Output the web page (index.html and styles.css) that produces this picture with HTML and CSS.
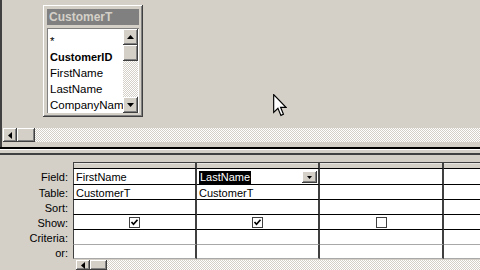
FILE: index.html
```html
<!DOCTYPE html>
<html>
<head>
<meta charset="utf-8">
<link rel="stylesheet" href="styles.css">
</head>
<body>
<section class="design">
  <div class="canvas">
    <div class="fieldlist">
      <div class="fl-title">CustomerT</div>
      <div class="fl-body">
        <ul class="fl-items">
          <li>*</li>
          <li class="pk">CustomerID</li>
          <li>FirstName</li>
          <li>LastName</li>
          <li>CompanyName</li>
        </ul>
        <div class="vscroll">
          <div class="btn arrow"><svg width="7" height="4" viewBox="0 0 7 4"><polygon points="3.5,0 7,4 0,4" fill="#000"/></svg></div>
          <div class="btn vthumb"></div>
          <div class="track"></div>
          <div class="btn arrow"><svg width="7" height="4" viewBox="0 0 7 4"><polygon points="0,0 7,0 3.5,4" fill="#000"/></svg></div>
        </div>
      </div>
    </div>
  </div>
  <div class="hscroll">
    <div class="btn arrow harrow"><svg width="4" height="7" viewBox="0 0 4 7"><polygon points="4,0 4,7 0,3.5" fill="#000"/></svg></div>
    <div class="btn hthumb"></div>
    <div class="track"></div>
  </div>
</section>
<div class="splitter"></div>
<section class="qbe">
  <div class="corner"></div>
  <div class="c h first"></div><div class="c h"></div><div class="c h"></div><div class="c h last"></div>

  <div class="lbl">Field:</div>
  <div class="c first">FirstName</div>
  <div class="c"><span class="sel">LastName</span><span class="btn dd"><svg width="5" height="3" viewBox="0 0 5 3"><polygon points="0,0 5,0 2.5,3" fill="#000"/></svg></span></div>
  <div class="c"></div><div class="c last"></div>

  <div class="lbl">Table:</div>
  <div class="c first">CustomerT</div><div class="c">CustomerT</div><div class="c"></div><div class="c last"></div>

  <div class="lbl">Sort:</div>
  <div class="c first"></div><div class="c"></div><div class="c"></div><div class="c last"></div>

  <div class="lbl">Show:</div>
  <div class="c first mid"><span class="chk"><svg width="9" height="9" viewBox="0 0 9 9"><path d="M1.5 4 L3.5 6.2 L7.5 1.8" fill="none" stroke="#000" stroke-width="1.7"/></svg></span></div>
  <div class="c mid"><span class="chk"><svg width="9" height="9" viewBox="0 0 9 9"><path d="M1.5 4 L3.5 6.2 L7.5 1.8" fill="none" stroke="#000" stroke-width="1.7"/></svg></span></div>
  <div class="c mid"><span class="chk"></span></div>
  <div class="c last"></div>

  <div class="lbl">Criteria:</div>
  <div class="c first soft"></div><div class="c soft"></div><div class="c soft"></div><div class="c last soft"></div>

  <div class="lbl">or:</div>
  <div class="c first soft"></div><div class="c soft"></div><div class="c soft"></div><div class="c last soft"></div>

  <div class="corner"></div>
  <div class="hscroll2">
    <div class="btn arrow harrow"><svg width="4" height="7" viewBox="0 0 4 7"><polygon points="4,0 4,7 0,3.5" fill="#000"/></svg></div>
    <div class="btn hthumb2"></div>
    <div class="track"></div>
  </div>
</section>
<svg class="cursor" width="14" height="23" viewBox="0 0 12 20">
  <path d="M0.5 0.5 L0.5 16 L4.2 12.4 L6.8 18.6 L9 17.6 L6.5 11.6 L11.2 11.6 Z" fill="#fff" stroke="#000" stroke-width="1"/>
</svg>
</body>
</html>
```

FILE: styles.css
```css
body {
  margin: 0;
  width: 480px;
  height: 270px;
  overflow: hidden;
  position: relative;
  background: #d4d0c8;
  font-family: "Liberation Sans", Arial, sans-serif;
  font-size: 11px;
  color: #000;
}

.btn {
  background: #d4d0c8;
  box-shadow: inset -1px -1px #404040, inset 1px 1px #fff, inset -2px -2px #808080, inset 2px 2px #d4d0c8;
  box-sizing: border-box;
}

.arrow {
  display: flex;
  align-items: center;
  justify-content: center;
}

.track {
  flex: 1;
  background: repeating-conic-gradient(#d4d0c8 0 25%, #fff 0 50%) 0 0 / 2px 2px;
}

/* upper design pane */
.design {
  height: 147px;
  box-sizing: border-box;
  border-left: 2px solid #404040;
  display: flex;
  flex-direction: column;
}

.canvas {
  height: 128px;
  box-sizing: border-box;
  padding: 5px 0 0 41px;
}

.fieldlist {
  width: 100px;
  height: 112px;
  box-sizing: border-box;
  padding: 4px;
  display: flex;
  flex-direction: column;
  gap: 3px;
  background: #d4d0c8;
  box-shadow: inset -1px -1px #404040, inset 1px 1px #fff, inset -2px -2px #808080, inset 2px 2px #d4d0c8;
}

.fl-title {
  height: 16px;
  line-height: 16px;
  padding-left: 2px;
  background: #808080;
  color: #d4d0c8;
  font-weight: bold;
  font-size: 12px;
}

.fl-body {
  flex: 1;
  display: flex;
  background: #fff;
  border-top: 1px solid #808080;
  border-left: 1px solid #808080;
}

.fl-items {
  flex: 1;
  min-width: 0;
  margin: 0;
  padding: 4px 0 0 2px;
  list-style: none;
  overflow: hidden;
  white-space: nowrap;
  line-height: 16px;
  font-size: 11.5px;
}

.fl-items .pk {
  font-weight: bold;
  font-size: 11px;
}

.vscroll {
  width: 15px;
  margin-right: 1px;
  display: flex;
  flex-direction: column;
}

.vscroll .arrow {
  height: 16px;
}

.vthumb {
  height: 16px;
}

.hscroll {
  height: 14px;
  margin-left: 1px;
  display: flex;
}

.harrow {
  width: 14px;
}

.hthumb {
  width: 18px;
}

/* splitter bar */
.splitter {
  height: 8px;
  box-sizing: border-box;
  border-top: 2px solid #000;
  border-bottom: 2px solid #404040;
  background: #d4d0c8;
  box-shadow: inset 0 1px #fff;
}

/* lower QBE grid */
.qbe {
  height: 115px;
  box-sizing: border-box;
  padding-top: 7px;
  display: grid;
  grid-template-columns: 73px 124px 123px 124px 1fr;
  grid-template-rows: 7px 16px 15px 15px 15px 15px 14px 1fr;
}

.lbl {
  text-align: right;
  padding: 1px 5px 0 0;
  line-height: 15px;
}

.c {
  box-sizing: border-box;
  background: #fff;
  border-bottom: 1px solid #000;
  border-right: 2px solid #404040;
  display: flex;
  align-items: center;
  padding: 1px 0 0 2px;
  white-space: nowrap;
  overflow: hidden;
}

.c.first {
  border-left: 1px solid #404040;
}

.c.last {
  border-right: none;
}

.c.soft {
  border-bottom-color: #a8a8a8;
}

.c.h {
  background: #d4d0c8;
  border-top: 1px solid #404040;
  box-shadow: inset 0 1px #e8e6e2;
}

.c.mid {
  justify-content: center;
  padding-left: 0;
}

.sel {
  background: #000;
  color: #fff;
  line-height: 13px;
  padding: 0 1px;
}

.dd {
  width: 15px;
  height: 12px;
  margin-left: auto;
  margin-right: 1px;
  display: flex;
  align-items: center;
  justify-content: center;
}

.chk {
  width: 11px;
  height: 11px;
  box-sizing: border-box;
  border: 1px solid #404040;
  background: #fff;
  display: flex;
  align-items: center;
  justify-content: center;
}

.hscroll2 {
  grid-column: 2 / -1;
  display: flex;
  padding: 1px 0 0 3px;
  background: #d4d0c8;
}

.hthumb2 {
  width: 17px;
}

.cursor {
  position: absolute;
  left: 273px;
  top: 94px;
}
```
